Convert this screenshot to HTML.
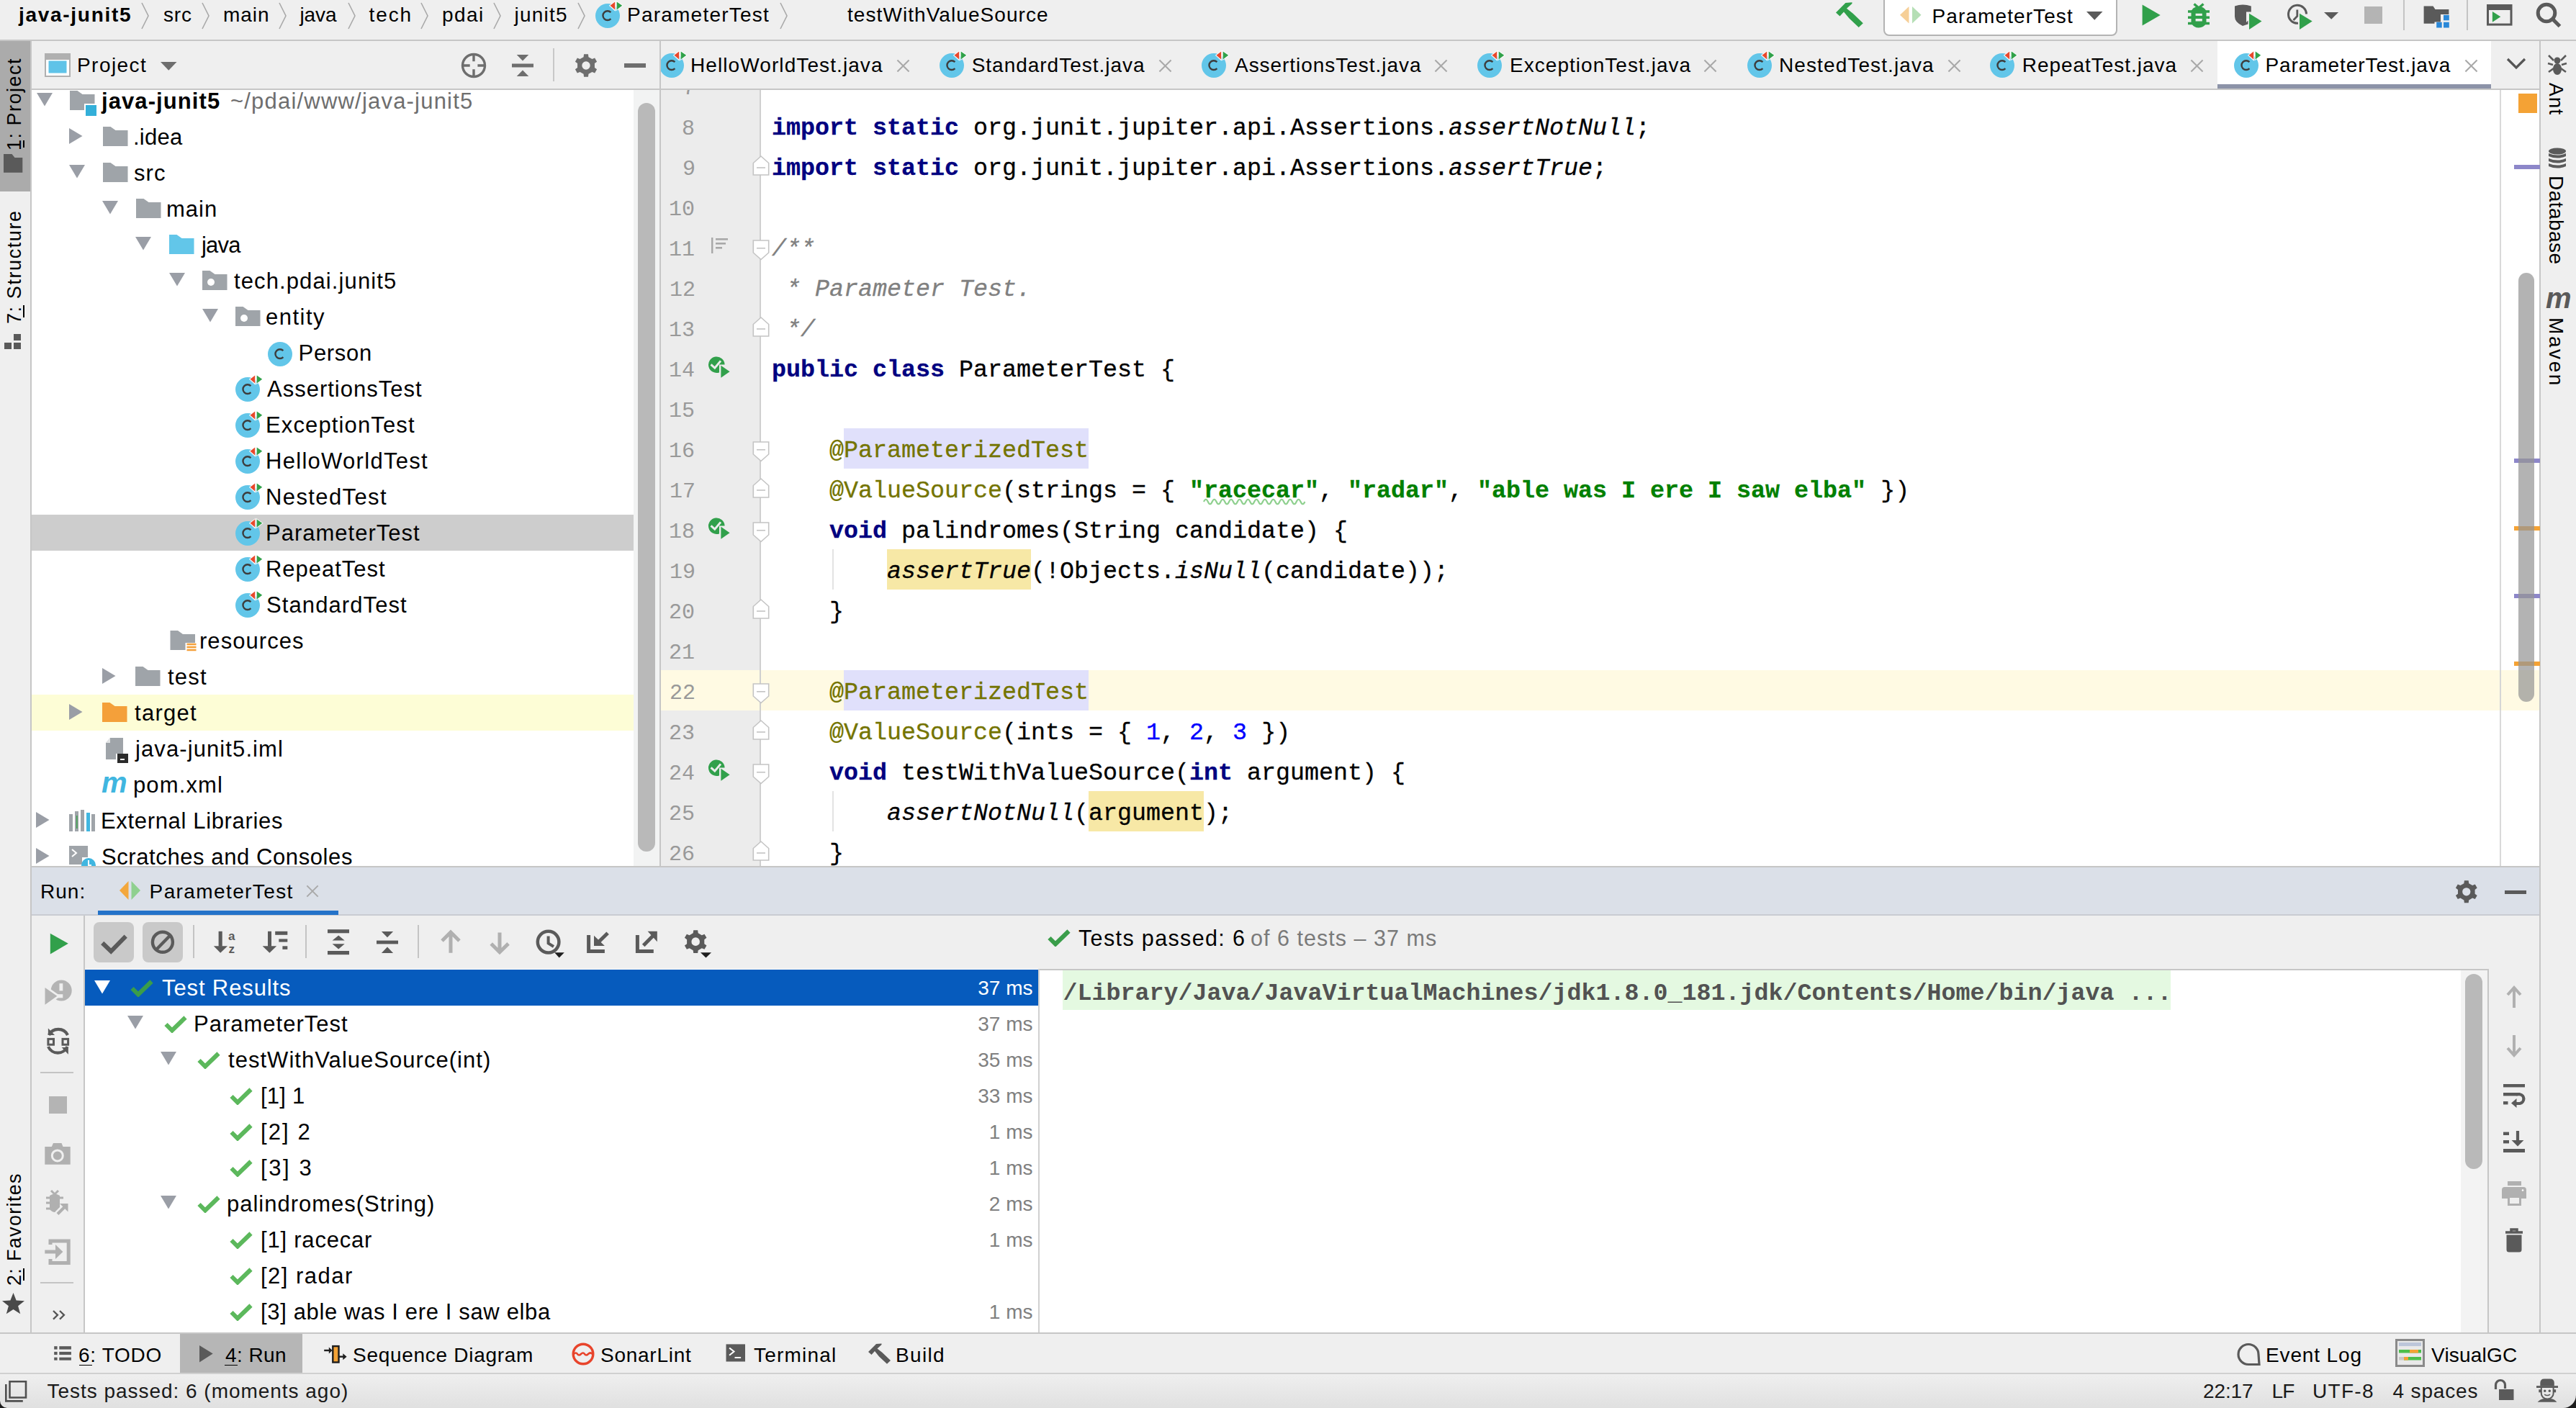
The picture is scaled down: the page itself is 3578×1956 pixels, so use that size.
<!DOCTYPE html>
<html><head><meta charset="utf-8"><style>
html,body{margin:0;padding:0;}
body{width:3578px;height:1956px;position:relative;overflow:hidden;background:#efefef;font-family:'Liberation Sans', sans-serif;}
body div{position:absolute;}
.t{white-space:pre;}
svg{position:absolute;overflow:visible;}
</style></head><body>
<svg width="0" height="0" style="position:absolute;left:0;top:0">
<defs>
<symbol id="clsT" viewBox="0 0 40 40" overflow="visible">
  <circle cx="18" cy="22" r="17" fill="#62c6e9"/>
  <path d="M22.4 17.1 A6.4 6.4 0 1 0 22.4 26.1" fill="none" stroke="#3d3d3d" stroke-width="2.4"/>
  <path d="M19.8 7.7 L29.2 0.8 V15.2 L28 15.2 Z M29.7 0.8 L39.8 7.7 L29.7 15.2 Z" fill="#ffffff" opacity="0.9"/>
  <path d="M21.5 7.7 L28.2 2.4 V13.5 Z" fill="#e9482c"/>
  <path d="M30.7 2.4 L38.2 7.7 L30.7 13.5 Z" fill="#31a24a"/>
</symbol>
<symbol id="cls" viewBox="0 0 40 40" overflow="visible">
  <circle cx="18" cy="22" r="17" fill="#62c6e9"/>
  <path d="M22.4 17.1 A6.4 6.4 0 1 0 22.4 26.1" fill="none" stroke="#3d3d3d" stroke-width="2.4"/>
</symbol>
<symbol id="fold" viewBox="0 0 35 27"><path d="M0 0 H10.5 L17.5 5 H34.5 V27 H0 Z" fill="#9fa4a9"/></symbol>
<symbol id="foldJ" viewBox="0 0 35 27"><path d="M0 0 H10.5 L17.5 5 H34.5 V27 H0 Z" fill="#62c6e9"/></symbol>
<symbol id="foldT" viewBox="0 0 35 27"><path d="M0 0 H10.5 L17.5 5 H34.5 V27 H0 Z" fill="#f4a03a"/></symbol>
<symbol id="foldP" viewBox="0 0 35 27"><path d="M0 0 H10.5 L17.5 5 H34.5 V27 H0 Z" fill="#9fa4a9"/><circle cx="12" cy="16" r="5" fill="#fff"/></symbol>
<symbol id="foldR" viewBox="0 0 35 30" overflow="visible"><path d="M0 0 H10.5 L17.5 5 H34.5 V17 H21 V27 H0 Z" fill="#9fa4a9"/>
  <path d="M23 19 h13 M23 23 h13 M23 27 h13" stroke="#f4a03a" stroke-width="2.4"/></symbol>
<symbol id="foldM" viewBox="0 0 37 35" overflow="visible"><path d="M0 0 H10.5 L17.5 5 H34.5 V18 H20 V27 H0 Z" fill="#9fa4a9"/><rect x="22" y="20" width="15" height="15" fill="#33afd9"/></symbol>
<symbol id="arrD" viewBox="0 0 22 19"><path d="M0 0 H22 L11 18.5 Z" fill="#9a9ea6"/></symbol>
<symbol id="arrR" viewBox="0 0 19 22"><path d="M0 0 L18.5 11 L0 22 Z" fill="#9a9ea6"/></symbol>
<symbol id="chk" viewBox="0 0 32 24"><path d="M2.5 12 L11 20.5 L29.5 2.5" fill="none" stroke="#5cb85c" stroke-width="6"/></symbol>
<symbol id="chkD" viewBox="0 0 32 24"><path d="M2.5 12 L11 20.5 L29.5 2.5" fill="none" stroke="#3a9d4a" stroke-width="6"/></symbol>
<symbol id="runG" viewBox="0 0 32 32" overflow="visible">
  <path d="M22.6 11.5 A11.3 11.3 0 1 0 15 22.4 V11.5 Z" fill="#31a04b"/>
  <path d="M3.5 11.4 L8.8 16.2 L17 6.4" fill="none" stroke="#ececec" stroke-width="3"/>
  <path d="M17.4 12.8 L29.6 21.3 L17.4 29.8 Z" fill="#31a04b"/>
</symbol>
<symbol id="foldS" viewBox="0 0 24 30" overflow="visible"><path d="M1.3 1 H22.7 V18 L12 27.5 L1.3 18 Z" fill="#fff" stroke="#c4c4c4" stroke-width="1.6"/><path d="M6 11.8 H18" stroke="#c4c4c4" stroke-width="1.6"/></symbol>
<symbol id="foldE" viewBox="0 0 24 30" overflow="visible"><path d="M12 1 L22.7 10.5 V27 H1.3 V10.5 Z" fill="#fff" stroke="#c4c4c4" stroke-width="1.6"/><path d="M6 17 H18" stroke="#c4c4c4" stroke-width="1.6"/></symbol>
<symbol id="xgray" viewBox="0 0 20 20"><path d="M1.5 1.5 L18.5 18.5 M18.5 1.5 L1.5 18.5" stroke="#a9a9a9" stroke-width="2.2"/></symbol>
<symbol id="gear" viewBox="0 0 32 32"><path fill="#5e5e5e" d="M13.5 1 h5 l0.8 4.2 a11 11 0 0 1 2.9 1.7 l4 -1.5 2.5 4.3 -3.2 2.8 a11 11 0 0 1 0 3.4 l3.2 2.8 -2.5 4.3 -4 -1.5 a11 11 0 0 1 -2.9 1.7 L18.5 31 h-5 l-0.8 -4.2 a11 11 0 0 1 -2.9 -1.7 l-4 1.5 -2.5 -4.3 3.2 -2.8 a11 11 0 0 1 0 -3.4 L3.3 10.5 5.8 6.2 l4 1.5 a11 11 0 0 1 2.9 -1.7 Z M16 10.5 a5.5 5.5 0 1 0 0.01 0 Z"/></symbol>
</defs></svg>
<div style="left:0px;top:0px;width:3578px;height:55px;background:#efefef;"></div>
<div style="left:0px;top:55px;width:3578px;height:2px;background:#c6c6c6;"></div>
<div class="t" style="left:26.0px;top:7.2px;font-family:'Liberation Sans', sans-serif;font-size:28px;line-height:28px;color:#000;font-weight:bold;letter-spacing:1.71px;">java-junit5</div>
<div class="t" style="left:227.0px;top:7.2px;font-family:'Liberation Sans', sans-serif;font-size:28px;line-height:28px;color:#000;letter-spacing:0.84px;">src</div>
<div class="t" style="left:310.0px;top:7.2px;font-family:'Liberation Sans', sans-serif;font-size:28px;line-height:28px;color:#000;letter-spacing:0.96px;">main</div>
<div class="t" style="left:416.5px;top:7.2px;font-family:'Liberation Sans', sans-serif;font-size:28px;line-height:28px;color:#000;letter-spacing:-0.10px;">java</div>
<div class="t" style="left:512.6px;top:7.2px;font-family:'Liberation Sans', sans-serif;font-size:28px;line-height:28px;color:#000;letter-spacing:1.88px;">tech</div>
<div class="t" style="left:614.0px;top:7.2px;font-family:'Liberation Sans', sans-serif;font-size:28px;line-height:28px;color:#000;letter-spacing:1.43px;">pdai</div>
<div class="t" style="left:714.5px;top:7.2px;font-family:'Liberation Sans', sans-serif;font-size:28px;line-height:28px;color:#000;letter-spacing:1.23px;">junit5</div>
<div class="t" style="left:871.0px;top:7.2px;font-family:'Liberation Sans', sans-serif;font-size:28px;line-height:28px;color:#000;letter-spacing:1.23px;">ParameterTest</div>
<div class="t" style="left:1177.0px;top:7.2px;font-family:'Liberation Sans', sans-serif;font-size:28px;line-height:28px;color:#000;letter-spacing:1.07px;">testWithValueSource</div>
<svg style="left:196px;top:3px" width="12" height="38"><polyline points="1,1 10,19 1,37" fill="none" stroke="#a8a8a8" stroke-width="1.6"/></svg>
<svg style="left:280px;top:3px" width="12" height="38"><polyline points="1,1 10,19 1,37" fill="none" stroke="#a8a8a8" stroke-width="1.6"/></svg>
<svg style="left:387px;top:3px" width="12" height="38"><polyline points="1,1 10,19 1,37" fill="none" stroke="#a8a8a8" stroke-width="1.6"/></svg>
<svg style="left:483px;top:3px" width="12" height="38"><polyline points="1,1 10,19 1,37" fill="none" stroke="#a8a8a8" stroke-width="1.6"/></svg>
<svg style="left:584px;top:3px" width="12" height="38"><polyline points="1,1 10,19 1,37" fill="none" stroke="#a8a8a8" stroke-width="1.6"/></svg>
<svg style="left:685px;top:3px" width="12" height="38"><polyline points="1,1 10,19 1,37" fill="none" stroke="#a8a8a8" stroke-width="1.6"/></svg>
<svg style="left:802px;top:3px" width="12" height="38"><polyline points="1,1 10,19 1,37" fill="none" stroke="#a8a8a8" stroke-width="1.6"/></svg>
<svg style="left:1083px;top:3px" width="12" height="38"><polyline points="1,1 10,19 1,37" fill="none" stroke="#a8a8a8" stroke-width="1.6"/></svg>
<div style="left:0px;top:57px;width:42px;height:1794px;background:#efefef;"></div>
<div style="left:42px;top:57px;width:2px;height:1794px;background:#c6c6c6;"></div>
<div style="left:0px;top:57px;width:42px;height:209px;background:#ababab;"></div>
<div style="left:44px;top:57px;width:872px;height:66px;background:#efefef;"></div>
<div style="left:44px;top:123px;width:872px;height:2px;background:#c6c6c6;"></div>
<div style="left:44px;top:125px;width:872px;height:1078px;background:#ffffff;"></div>
<div style="left:916px;top:57px;width:2px;height:1146px;background:#c6c6c6;"></div>
<div class="t" style="left:107.0px;top:77.2px;font-family:'Liberation Sans', sans-serif;font-size:28px;line-height:28px;color:#000;letter-spacing:1.44px;">Project</div>
<div style="left:880px;top:125px;width:36px;height:1078px;background:#f2f3f3;"></div>
<div style="left:886px;top:143px;width:24px;height:1040px;background:#b9b9b9;border-radius:12px;"></div>
<div style="left:44px;top:715px;width:836px;height:50px;background:#cdcdcd;"></div>
<div style="left:44px;top:965px;width:836px;height:50px;background:#fdfdd6;"></div>
<div style="left:44px;top:125px;width:836px;height:1078px;overflow:hidden">
<div class="t" style="left:97.0px;top:-0.3px;font-family:'Liberation Sans', sans-serif;font-size:31px;line-height:31px;color:#000;font-weight:bold;letter-spacing:1.09px;">java-junit5</div>
<div class="t" style="left:141.0px;top:49.7px;font-family:'Liberation Sans', sans-serif;font-size:31px;line-height:31px;color:#000;letter-spacing:0.25px;">.idea</div>
<div class="t" style="left:142.0px;top:99.7px;font-family:'Liberation Sans', sans-serif;font-size:31px;line-height:31px;color:#000;letter-spacing:1.09px;">src</div>
<div class="t" style="left:187.0px;top:149.7px;font-family:'Liberation Sans', sans-serif;font-size:31px;line-height:31px;color:#000;letter-spacing:1.02px;">main</div>
<div class="t" style="left:236.0px;top:199.7px;font-family:'Liberation Sans', sans-serif;font-size:31px;line-height:31px;color:#000;letter-spacing:-0.80px;">java</div>
<div class="t" style="left:281.0px;top:249.7px;font-family:'Liberation Sans', sans-serif;font-size:31px;line-height:31px;color:#000;letter-spacing:1.11px;">tech.pdai.junit5</div>
<div class="t" style="left:325.0px;top:299.6px;font-family:'Liberation Sans', sans-serif;font-size:31px;line-height:31px;color:#000;letter-spacing:1.48px;">entity</div>
<div class="t" style="left:370.5px;top:349.6px;font-family:'Liberation Sans', sans-serif;font-size:31px;line-height:31px;color:#000;letter-spacing:0.70px;">Person</div>
<div class="t" style="left:327.0px;top:399.6px;font-family:'Liberation Sans', sans-serif;font-size:31px;line-height:31px;color:#000;letter-spacing:1.00px;">AssertionsTest</div>
<div class="t" style="left:325.0px;top:449.6px;font-family:'Liberation Sans', sans-serif;font-size:31px;line-height:31px;color:#000;letter-spacing:1.13px;">ExceptionTest</div>
<div class="t" style="left:325.0px;top:499.6px;font-family:'Liberation Sans', sans-serif;font-size:31px;line-height:31px;color:#000;letter-spacing:1.29px;">HelloWorldTest</div>
<div class="t" style="left:325.0px;top:549.6px;font-family:'Liberation Sans', sans-serif;font-size:31px;line-height:31px;color:#000;letter-spacing:1.39px;">NestedTest</div>
<div class="t" style="left:325.0px;top:599.6px;font-family:'Liberation Sans', sans-serif;font-size:31px;line-height:31px;color:#000;letter-spacing:1.00px;">ParameterTest</div>
<div class="t" style="left:325.0px;top:649.6px;font-family:'Liberation Sans', sans-serif;font-size:31px;line-height:31px;color:#000;letter-spacing:0.98px;">RepeatTest</div>
<div class="t" style="left:326.0px;top:699.6px;font-family:'Liberation Sans', sans-serif;font-size:31px;line-height:31px;color:#000;letter-spacing:1.09px;">StandardTest</div>
<div class="t" style="left:233.0px;top:749.6px;font-family:'Liberation Sans', sans-serif;font-size:31px;line-height:31px;color:#000;letter-spacing:1.05px;">resources</div>
<div class="t" style="left:189.0px;top:799.6px;font-family:'Liberation Sans', sans-serif;font-size:31px;line-height:31px;color:#000;letter-spacing:1.22px;">test</div>
<div class="t" style="left:143.0px;top:849.6px;font-family:'Liberation Sans', sans-serif;font-size:31px;line-height:31px;color:#000;letter-spacing:1.27px;">target</div>
<div class="t" style="left:144.0px;top:899.6px;font-family:'Liberation Sans', sans-serif;font-size:31px;line-height:31px;color:#000;letter-spacing:1.10px;">java-junit5.iml</div>
<div class="t" style="left:141.0px;top:949.6px;font-family:'Liberation Sans', sans-serif;font-size:31px;line-height:31px;color:#000;letter-spacing:1.13px;">pom.xml</div>
<div class="t" style="left:96.0px;top:999.6px;font-family:'Liberation Sans', sans-serif;font-size:31px;line-height:31px;color:#000;letter-spacing:0.66px;">External Libraries</div>
<div class="t" style="left:97.0px;top:1049.7px;font-family:'Liberation Sans', sans-serif;font-size:31px;line-height:31px;color:#000;letter-spacing:0.59px;">Scratches and Consoles</div>
<div class="t" style="left:276.0px;top:-0.3px;font-family:'Liberation Sans', sans-serif;font-size:31px;line-height:31px;color:#6e6e6e;letter-spacing:1.20px;">~/pdai/www/java-junit5</div>
</div>
<div style="left:918px;top:57px;width:2609px;height:66px;background:#efefef;"></div>
<div style="left:918px;top:123px;width:2609px;height:2px;background:#c6c6c6;"></div>
<div style="left:3080px;top:57px;width:380px;height:66px;background:#ffffff;"></div>
<div style="left:3080px;top:117px;width:380px;height:6px;background:#8c93a8;"></div>
<div class="t" style="left:959.0px;top:77.2px;font-family:'Liberation Sans', sans-serif;font-size:28px;line-height:28px;color:#000;letter-spacing:1.09px;">HelloWorldTest.java</div>
<div class="t" style="left:1349.7px;top:77.2px;font-family:'Liberation Sans', sans-serif;font-size:28px;line-height:28px;color:#000;letter-spacing:0.98px;">StandardTest.java</div>
<div class="t" style="left:1715.0px;top:77.2px;font-family:'Liberation Sans', sans-serif;font-size:28px;line-height:28px;color:#000;letter-spacing:0.96px;">AssertionsTest.java</div>
<div class="t" style="left:2097.0px;top:77.2px;font-family:'Liberation Sans', sans-serif;font-size:28px;line-height:28px;color:#000;letter-spacing:1.04px;">ExceptionTest.java</div>
<div class="t" style="left:2471.0px;top:77.2px;font-family:'Liberation Sans', sans-serif;font-size:28px;line-height:28px;color:#000;letter-spacing:1.10px;">NestedTest.java</div>
<div class="t" style="left:2808.8px;top:77.2px;font-family:'Liberation Sans', sans-serif;font-size:28px;line-height:28px;color:#000;letter-spacing:0.96px;">RepeatTest.java</div>
<div class="t" style="left:3146.5px;top:77.2px;font-family:'Liberation Sans', sans-serif;font-size:28px;line-height:28px;color:#000;letter-spacing:0.92px;">ParameterTest.java</div>
<div style="left:918px;top:125px;width:138px;height:1078px;background:#ececec;"></div>
<div style="left:1055px;top:125px;width:2px;height:1078px;background:#cfcfcf;"></div>
<div style="left:1057px;top:125px;width:2416px;height:1078px;background:#ffffff;"></div>
<div style="left:3472px;top:125px;width:2px;height:1078px;background:#d9d9d9;"></div>
<div style="left:3474px;top:125px;width:53px;height:1078px;background:#ffffff;"></div>
<div style="left:3527px;top:57px;width:2px;height:1794px;background:#c6c6c6;"></div>
<div style="left:3529px;top:57px;width:49px;height:1794px;background:#efefef;"></div>
<div style="left:44px;top:1203px;width:3483px;height:2px;background:#c6c6c6;"></div>
<div style="left:44px;top:1205px;width:3483px;height:66px;background:#dbe0e8;"></div>
<div style="left:44px;top:1270px;width:3483px;height:2px;background:#c9ccd2;"></div>
<div class="t" style="left:56.0px;top:1225.2px;font-family:'Liberation Sans', sans-serif;font-size:28px;line-height:28px;color:#000;letter-spacing:1.04px;">Run:</div>
<div class="t" style="left:207.6px;top:1225.2px;font-family:'Liberation Sans', sans-serif;font-size:28px;line-height:28px;color:#000;letter-spacing:1.39px;">ParameterTest</div>
<div style="left:136px;top:1265px;width:334px;height:6px;background:#2473c9;"></div>
<div style="left:44px;top:1272px;width:3483px;height:579px;background:#efefef;"></div>
<div style="left:116px;top:1272px;width:2px;height:579px;background:#c6c6c6;"></div>
<div style="left:118px;top:1346px;width:1324px;height:505px;background:#ffffff;"></div>
<div style="left:1442px;top:1346px;width:2px;height:505px;background:#d0d0d0;"></div>
<div style="left:1444px;top:1346px;width:2011px;height:2px;background:#c6c6c6;"></div>
<div style="left:1444px;top:1348px;width:2011px;height:503px;background:#ffffff;"></div>
<div style="left:3455px;top:1346px;width:2px;height:505px;background:#c6c6c6;"></div>
<div style="left:3418px;top:1348px;width:37px;height:503px;background:#f3f3f3;"></div>
<div style="left:3424px;top:1353px;width:24px;height:271px;background:#b9b9b9;border-radius:12px;"></div>
<div style="left:1476px;top:1348px;width:1539px;height:55px;background:#e4f9e1;"></div>
<div class="t" style="left:1476.5px;top:1363.7px;font-family:'Liberation Mono', monospace;font-size:33.33px;line-height:33.33px;color:#525252;font-weight:bold;">/Library/Java/JavaVirtualMachines/jdk1.8.0_181.jdk/Contents/Home/bin/java ...</div>
<div style="left:118px;top:1347px;width:1324px;height:50px;background:#065bbd;"></div>
<div class="t" style="left:225.0px;top:1356.7px;font-family:'Liberation Sans', sans-serif;font-size:31px;line-height:31px;color:#ffffff;letter-spacing:0.88px;">Test Results</div>
<div class="t" style="left:269.0px;top:1406.7px;font-family:'Liberation Sans', sans-serif;font-size:31px;line-height:31px;color:#000;letter-spacing:1.00px;">ParameterTest</div>
<div class="t" style="left:317.0px;top:1456.7px;font-family:'Liberation Sans', sans-serif;font-size:31px;line-height:31px;color:#000;letter-spacing:1.03px;">testWithValueSource(int)</div>
<div class="t" style="left:362.0px;top:1506.7px;font-family:'Liberation Sans', sans-serif;font-size:31px;line-height:31px;color:#000;letter-spacing:0.23px;">[1] 1</div>
<div class="t" style="left:362.0px;top:1556.7px;font-family:'Liberation Sans', sans-serif;font-size:31px;line-height:31px;color:#000;letter-spacing:2.11px;">[2] 2</div>
<div class="t" style="left:362.0px;top:1606.7px;font-family:'Liberation Sans', sans-serif;font-size:31px;line-height:31px;color:#000;letter-spacing:2.58px;">[3] 3</div>
<div class="t" style="left:315.0px;top:1656.7px;font-family:'Liberation Sans', sans-serif;font-size:31px;line-height:31px;color:#000;letter-spacing:0.99px;">palindromes(String)</div>
<div class="t" style="left:362.0px;top:1706.7px;font-family:'Liberation Sans', sans-serif;font-size:31px;line-height:31px;color:#000;letter-spacing:0.79px;">[1] racecar</div>
<div class="t" style="left:362.0px;top:1756.7px;font-family:'Liberation Sans', sans-serif;font-size:31px;line-height:31px;color:#000;letter-spacing:1.48px;">[2] radar</div>
<div class="t" style="left:362.0px;top:1806.7px;font-family:'Liberation Sans', sans-serif;font-size:31px;line-height:31px;color:#000;letter-spacing:0.64px;">[3] able was I ere I saw elba</div>
<div class="t" style="left:1358.3px;top:1359.2px;font-family:'Liberation Sans', sans-serif;font-size:28px;line-height:28px;color:#ffffff;">37 ms</div>
<div class="t" style="left:1358.3px;top:1409.2px;font-family:'Liberation Sans', sans-serif;font-size:28px;line-height:28px;color:#808080;">37 ms</div>
<div class="t" style="left:1358.3px;top:1459.2px;font-family:'Liberation Sans', sans-serif;font-size:28px;line-height:28px;color:#808080;">35 ms</div>
<div class="t" style="left:1358.3px;top:1509.2px;font-family:'Liberation Sans', sans-serif;font-size:28px;line-height:28px;color:#808080;">33 ms</div>
<div class="t" style="left:1373.8px;top:1559.2px;font-family:'Liberation Sans', sans-serif;font-size:28px;line-height:28px;color:#808080;">1 ms</div>
<div class="t" style="left:1373.8px;top:1609.2px;font-family:'Liberation Sans', sans-serif;font-size:28px;line-height:28px;color:#808080;">1 ms</div>
<div class="t" style="left:1373.8px;top:1659.2px;font-family:'Liberation Sans', sans-serif;font-size:28px;line-height:28px;color:#808080;">2 ms</div>
<div class="t" style="left:1373.8px;top:1709.2px;font-family:'Liberation Sans', sans-serif;font-size:28px;line-height:28px;color:#808080;">1 ms</div>
<div class="t" style="left:1373.8px;top:1809.2px;font-family:'Liberation Sans', sans-serif;font-size:28px;line-height:28px;color:#808080;">1 ms</div>
<div class="t" style="left:1498.0px;top:1288.1px;font-family:'Liberation Sans', sans-serif;font-size:30.5px;line-height:30.5px;color:#000;letter-spacing:1.36px;">Tests passed: 6</div>
<div class="t" style="left:1737.0px;top:1288.1px;font-family:'Liberation Sans', sans-serif;font-size:30.5px;line-height:30.5px;color:#7a7a7a;letter-spacing:1.03px;">of 6 tests – 37 ms</div>
<div style="left:0px;top:1851px;width:3578px;height:2px;background:#c6c6c6;"></div>
<div style="left:0px;top:1853px;width:3578px;height:54px;background:#efefef;"></div>
<div style="left:250px;top:1853px;width:170px;height:54px;background:#b6b6b6;"></div>
<div class="t" style="left:109.0px;top:1869.2px;font-family:'Liberation Sans', sans-serif;font-size:28px;line-height:28px;color:#000;letter-spacing:0.71px;">6: TODO</div>
<div class="t" style="left:313.0px;top:1869.2px;font-family:'Liberation Sans', sans-serif;font-size:28px;line-height:28px;color:#000;letter-spacing:0.42px;">4: Run</div>
<div class="t" style="left:490.0px;top:1869.2px;font-family:'Liberation Sans', sans-serif;font-size:28px;line-height:28px;color:#000;letter-spacing:0.71px;">Sequence Diagram</div>
<div class="t" style="left:834.0px;top:1869.2px;font-family:'Liberation Sans', sans-serif;font-size:28px;line-height:28px;color:#000;letter-spacing:0.74px;">SonarLint</div>
<div class="t" style="left:1047.0px;top:1869.2px;font-family:'Liberation Sans', sans-serif;font-size:28px;line-height:28px;color:#000;letter-spacing:1.20px;">Terminal</div>
<div class="t" style="left:1244.0px;top:1869.2px;font-family:'Liberation Sans', sans-serif;font-size:28px;line-height:28px;color:#000;letter-spacing:1.33px;">Build</div>
<div class="t" style="left:3147.0px;top:1869.2px;font-family:'Liberation Sans', sans-serif;font-size:28px;line-height:28px;color:#000;letter-spacing:0.87px;">Event Log</div>
<div class="t" style="left:3377.0px;top:1869.2px;font-family:'Liberation Sans', sans-serif;font-size:28px;line-height:28px;color:#000;letter-spacing:0.21px;">VisualGC</div>
<div style="left:0px;top:1907px;width:3578px;height:2px;background:#d0d0d0;"></div>
<div style="left:0px;top:1909px;width:3578px;height:47px;background:linear-gradient(#efefef,#e0e0e0);"></div>
<div class="t" style="left:65.5px;top:1919.2px;font-family:'Liberation Sans', sans-serif;font-size:28px;line-height:28px;color:#1a1a1a;letter-spacing:0.97px;">Tests passed: 6 (moments ago)</div>
<div class="t" style="left:3060.0px;top:1919.2px;font-family:'Liberation Sans', sans-serif;font-size:28px;line-height:28px;color:#1a1a1a;letter-spacing:-0.12px;">22:17</div>
<div class="t" style="left:3155.6px;top:1919.2px;font-family:'Liberation Sans', sans-serif;font-size:28px;line-height:28px;color:#1a1a1a;letter-spacing:-0.80px;">LF</div>
<div class="t" style="left:3212.0px;top:1919.2px;font-family:'Liberation Sans', sans-serif;font-size:28px;line-height:28px;color:#1a1a1a;letter-spacing:1.31px;">UTF-8</div>
<div class="t" style="left:3323.6px;top:1919.2px;font-family:'Liberation Sans', sans-serif;font-size:28px;line-height:28px;color:#1a1a1a;letter-spacing:0.82px;">4 spaces</div>
<div style="left:918px;top:125px;width:2609px;height:1078px;overflow:hidden">
<div style="left:0px;top:806px;width:2609px;height:56px;background:#fffae3;"></div>
<div style="left:137px;top:806px;width:2px;height:56px;background:#cfcfcf;"></div>
<div style="left:254px;top:470px;width:340px;height:56px;background:#e0e0fb;"></div>
<div style="left:254px;top:806px;width:340px;height:56px;background:#e0e0fb;"></div>
<div style="left:314px;top:638px;width:200px;height:56px;background:#f7e8a6;"></div>
<div style="left:594px;top:974px;width:160px;height:56px;background:#f7e8a6;"></div>
<div style="left:238px;top:638px;width:2px;height:56px;background:#e3e3e3;"></div>
<div style="left:238px;top:974px;width:2px;height:56px;background:#e3e3e3;"></div>
<div class="t" style="left:154px;top:37.1px;font-family:'Liberation Mono', monospace;font-size:33.33px;line-height:33.33px;color:#000;-webkit-text-stroke:0.3px"><span style="color:#000080;font-weight:bold">import</span> <span style="color:#000080;font-weight:bold">static</span> org.junit.jupiter.api.Assertions.<span style="font-style:italic">assertNotNull</span>;</div>
<div class="t" style="left:154px;top:93.1px;font-family:'Liberation Mono', monospace;font-size:33.33px;line-height:33.33px;color:#000;-webkit-text-stroke:0.3px"><span style="color:#000080;font-weight:bold">import</span> <span style="color:#000080;font-weight:bold">static</span> org.junit.jupiter.api.Assertions.<span style="font-style:italic">assertTrue</span>;</div>
<div class="t" style="left:154px;top:205.1px;font-family:'Liberation Mono', monospace;font-size:33.33px;line-height:33.33px;color:#000;-webkit-text-stroke:0.3px"><span style="color:#808080;font-style:italic">/**</span></div>
<div class="t" style="left:154px;top:261.1px;font-family:'Liberation Mono', monospace;font-size:33.33px;line-height:33.33px;color:#000;-webkit-text-stroke:0.3px"><span style="color:#808080;font-style:italic"> * Parameter Test.</span></div>
<div class="t" style="left:154px;top:317.1px;font-family:'Liberation Mono', monospace;font-size:33.33px;line-height:33.33px;color:#000;-webkit-text-stroke:0.3px"><span style="color:#808080;font-style:italic"> */</span></div>
<div class="t" style="left:154px;top:373.1px;font-family:'Liberation Mono', monospace;font-size:33.33px;line-height:33.33px;color:#000;-webkit-text-stroke:0.3px"><span style="color:#000080;font-weight:bold">public</span> <span style="color:#000080;font-weight:bold">class</span> ParameterTest {</div>
<div class="t" style="left:154px;top:485.1px;font-family:'Liberation Mono', monospace;font-size:33.33px;line-height:33.33px;color:#000;-webkit-text-stroke:0.3px">    <span style="color:#747400">@ParameterizedTest</span></div>
<div class="t" style="left:154px;top:541.1px;font-family:'Liberation Mono', monospace;font-size:33.33px;line-height:33.33px;color:#000;-webkit-text-stroke:0.3px">    <span style="color:#747400">@ValueSource</span>(strings = { <span style="color:#008000;font-weight:bold">"racecar"</span>, <span style="color:#008000;font-weight:bold">"radar"</span>, <span style="color:#008000;font-weight:bold">"able was I ere I saw elba"</span> })</div>
<div class="t" style="left:154px;top:597.1px;font-family:'Liberation Mono', monospace;font-size:33.33px;line-height:33.33px;color:#000;-webkit-text-stroke:0.3px">    <span style="color:#000080;font-weight:bold">void</span> palindromes(String candidate) {</div>
<div class="t" style="left:154px;top:653.1px;font-family:'Liberation Mono', monospace;font-size:33.33px;line-height:33.33px;color:#000;-webkit-text-stroke:0.3px">        <span style="font-style:italic">assertTrue</span>(!Objects.<span style="font-style:italic">isNull</span>(candidate));</div>
<div class="t" style="left:154px;top:709.1px;font-family:'Liberation Mono', monospace;font-size:33.33px;line-height:33.33px;color:#000;-webkit-text-stroke:0.3px">    }</div>
<div class="t" style="left:154px;top:821.1px;font-family:'Liberation Mono', monospace;font-size:33.33px;line-height:33.33px;color:#000;-webkit-text-stroke:0.3px">    <span style="color:#747400">@ParameterizedTest</span></div>
<div class="t" style="left:154px;top:877.1px;font-family:'Liberation Mono', monospace;font-size:33.33px;line-height:33.33px;color:#000;-webkit-text-stroke:0.3px">    <span style="color:#747400">@ValueSource</span>(ints = { <span style="color:#0000ff">1</span>, <span style="color:#0000ff">2</span>, <span style="color:#0000ff">3</span> })</div>
<div class="t" style="left:154px;top:933.1px;font-family:'Liberation Mono', monospace;font-size:33.33px;line-height:33.33px;color:#000;-webkit-text-stroke:0.3px">    <span style="color:#000080;font-weight:bold">void</span> testWithValueSource(<span style="color:#000080;font-weight:bold">int</span> argument) {</div>
<div class="t" style="left:154px;top:989.1px;font-family:'Liberation Mono', monospace;font-size:33.33px;line-height:33.33px;color:#000;-webkit-text-stroke:0.3px">        <span style="font-style:italic">assertNotNull</span>(argument);</div>
<div class="t" style="left:154px;top:1045.1px;font-family:'Liberation Mono', monospace;font-size:33.33px;line-height:33.33px;color:#000;-webkit-text-stroke:0.3px">    }</div>
<div class="t" style="left:30.0px;top:-17.3px;font-family:'Liberation Mono', monospace;font-size:30px;line-height:30px;color:#999999;">7</div>
<div class="t" style="left:29.0px;top:38.7px;font-family:'Liberation Mono', monospace;font-size:30px;line-height:30px;color:#999999;">8</div>
<div class="t" style="left:30.0px;top:94.7px;font-family:'Liberation Mono', monospace;font-size:30px;line-height:30px;color:#999999;">9</div>
<div class="t" style="left:11.0px;top:150.7px;font-family:'Liberation Mono', monospace;font-size:30px;line-height:30px;color:#999999;">10</div>
<div class="t" style="left:11.0px;top:206.7px;font-family:'Liberation Mono', monospace;font-size:30px;line-height:30px;color:#999999;">11</div>
<div class="t" style="left:12.0px;top:262.7px;font-family:'Liberation Mono', monospace;font-size:30px;line-height:30px;color:#999999;">12</div>
<div class="t" style="left:11.0px;top:318.7px;font-family:'Liberation Mono', monospace;font-size:30px;line-height:30px;color:#999999;">13</div>
<div class="t" style="left:11.0px;top:374.7px;font-family:'Liberation Mono', monospace;font-size:30px;line-height:30px;color:#999999;">14</div>
<div class="t" style="left:11.0px;top:430.7px;font-family:'Liberation Mono', monospace;font-size:30px;line-height:30px;color:#999999;">15</div>
<div class="t" style="left:11.0px;top:486.7px;font-family:'Liberation Mono', monospace;font-size:30px;line-height:30px;color:#999999;">16</div>
<div class="t" style="left:12.0px;top:542.7px;font-family:'Liberation Mono', monospace;font-size:30px;line-height:30px;color:#999999;">17</div>
<div class="t" style="left:11.0px;top:598.7px;font-family:'Liberation Mono', monospace;font-size:30px;line-height:30px;color:#999999;">18</div>
<div class="t" style="left:12.0px;top:654.7px;font-family:'Liberation Mono', monospace;font-size:30px;line-height:30px;color:#999999;">19</div>
<div class="t" style="left:11.0px;top:710.7px;font-family:'Liberation Mono', monospace;font-size:30px;line-height:30px;color:#999999;">20</div>
<div class="t" style="left:11.0px;top:766.7px;font-family:'Liberation Mono', monospace;font-size:30px;line-height:30px;color:#999999;">21</div>
<div class="t" style="left:12.0px;top:822.7px;font-family:'Liberation Mono', monospace;font-size:30px;line-height:30px;color:#999999;">22</div>
<div class="t" style="left:11.0px;top:878.7px;font-family:'Liberation Mono', monospace;font-size:30px;line-height:30px;color:#999999;">23</div>
<div class="t" style="left:11.0px;top:934.7px;font-family:'Liberation Mono', monospace;font-size:30px;line-height:30px;color:#999999;">24</div>
<div class="t" style="left:11.0px;top:990.7px;font-family:'Liberation Mono', monospace;font-size:30px;line-height:30px;color:#999999;">25</div>
<div class="t" style="left:11.0px;top:1046.7px;font-family:'Liberation Mono', monospace;font-size:30px;line-height:30px;color:#999999;">26</div>
</div>
<div style="left:3472px;top:931px;width:2px;height:56px;background:#d6d6d6;"></div>
<div style="left:3498px;top:130px;width:26px;height:27px;background:#f4a235;"></div>
<div style="left:3492px;top:229px;width:36px;height:6px;background:#8d87c9;"></div>
<div style="left:3492px;top:637px;width:36px;height:6px;background:#8d87c9;"></div>
<div style="left:3492px;top:731px;width:36px;height:6px;background:#f4a235;"></div>
<div style="left:3492px;top:825px;width:36px;height:6px;background:#8d87c9;"></div>
<div style="left:3492px;top:919px;width:36px;height:6px;background:#f4a235;"></div>
<div style="left:3498px;top:379px;width:22px;height:596px;background:rgba(150,150,150,0.72);border-radius:11px;"></div>
<div style="left:44px;top:125px;width:836px;height:1078px;overflow:hidden">
<svg style="left:6.600000000000001px;top:4px;" width="22" height="19"><use href="#arrD" width="22" height="19"/></svg>
<svg style="left:52.8px;top:1.2999999999999972px;" width="37" height="35"><use href="#foldM" width="37" height="35"/></svg>
<svg style="left:52px;top:53px;" width="19" height="22"><use href="#arrR" width="19" height="22"/></svg>
<svg style="left:98.6px;top:51px;" width="35" height="27"><use href="#fold" width="35" height="27"/></svg>
<svg style="left:52px;top:104px;" width="22" height="19"><use href="#arrD" width="22" height="19"/></svg>
<svg style="left:98.6px;top:101px;" width="35" height="27"><use href="#fold" width="35" height="27"/></svg>
<svg style="left:98px;top:154px;" width="22" height="19"><use href="#arrD" width="22" height="19"/></svg>
<svg style="left:144.6px;top:151px;" width="35" height="27"><use href="#fold" width="35" height="27"/></svg>
<svg style="left:144px;top:204px;" width="22" height="19"><use href="#arrD" width="22" height="19"/></svg>
<svg style="left:190.6px;top:201px;" width="35" height="27"><use href="#foldJ" width="35" height="27"/></svg>
<svg style="left:190.75px;top:254px;" width="22" height="19"><use href="#arrD" width="22" height="19"/></svg>
<svg style="left:237px;top:251px;" width="35" height="27"><use href="#foldP" width="35" height="27"/></svg>
<svg style="left:236.75px;top:304px;" width="22" height="19"><use href="#arrD" width="22" height="19"/></svg>
<svg style="left:283px;top:301px;" width="35" height="27"><use href="#foldP" width="35" height="27"/></svg>
<svg style="left:327px;top:345px;" width="40" height="40"><use href="#cls" width="40" height="40"/></svg>
<svg style="left:281.5px;top:394px;" width="40" height="40"><use href="#clsT" width="40" height="40"/></svg>
<svg style="left:281.5px;top:444px;" width="40" height="40"><use href="#clsT" width="40" height="40"/></svg>
<svg style="left:281.5px;top:494px;" width="40" height="40"><use href="#clsT" width="40" height="40"/></svg>
<svg style="left:281.5px;top:544px;" width="40" height="40"><use href="#clsT" width="40" height="40"/></svg>
<svg style="left:281.5px;top:594px;" width="40" height="40"><use href="#clsT" width="40" height="40"/></svg>
<svg style="left:281.5px;top:644px;" width="40" height="40"><use href="#clsT" width="40" height="40"/></svg>
<svg style="left:281.5px;top:694px;" width="40" height="40"><use href="#clsT" width="40" height="40"/></svg>
<svg style="left:190px;top:751px;" width="40" height="30"><use href="#foldR" width="40" height="30"/></svg>
<svg style="left:98px;top:803px;" width="19" height="22"><use href="#arrR" width="19" height="22"/></svg>
<svg style="left:144px;top:801px;" width="35" height="27"><use href="#fold" width="35" height="27"/></svg>
<svg style="left:51.7px;top:853px;" width="19" height="22"><use href="#arrR" width="19" height="22"/></svg>
<svg style="left:98px;top:851px;" width="35" height="27"><use href="#foldT" width="35" height="27"/></svg>
<svg style="left:102px;top:900px;" width="36" height="36" viewBox="0 0 36 36"><path d="M7 0 H25 V22 H15 V30 H1 V7 Z" fill="#9fa4a9"/><path d="M1 7 L7 0 V7 Z" fill="#fff" opacity="0.7"/><rect x="17" y="22" width="15" height="13" fill="#2b2b2b"/><rect x="21" y="29" width="6" height="2" fill="#fff"/></svg>
<div class="t" style="left:97.0px;top:942.0px;font-family:'Liberation Sans', sans-serif;font-size:40px;line-height:40px;color:#40b6e0;font-weight:bold;font-style:italic;">m</div>
<svg style="left:6px;top:1003px;" width="19" height="22"><use href="#arrR" width="19" height="22"/></svg>
<svg style="left:51.7px;top:1000px;" width="36" height="30" viewBox="0 0 36 30"><rect x="0" y="6" width="5" height="24" fill="#9fa4a9"/><rect x="8" y="2" width="5" height="28" fill="#9fa4a9"/><rect x="10" y="8" width="1.5" height="18" fill="#3aa04a"/><rect x="16" y="0" width="5" height="30" fill="#9fa4a9"/><rect x="24" y="4" width="5" height="26" fill="#40b6e0"/><rect x="31" y="6" width="5" height="24" fill="#9fa4a9"/></svg>
<svg style="left:6px;top:1053px;" width="19" height="22"><use href="#arrR" width="19" height="22"/></svg>
<svg style="left:51.7px;top:1050px;" width="40" height="36" viewBox="0 0 40 36"><path d="M0 0 H26 V16 H18 V26 H0 Z" fill="#9fa4a9"/><path d="M4 5 L10 10 L4 15" fill="none" stroke="#fff" stroke-width="2"/><circle cx="27" cy="27" r="10" fill="#40b6e0"/><path d="M27 20 V27 H31" stroke="#fff" stroke-width="2" fill="none"/></svg>
</div>
<svg style="left:826px;top:0px;" width="40" height="40"><use href="#clsT" width="40" height="40"/></svg>
<svg style="left:915px;top:69px;" width="40" height="40"><use href="#clsT" width="40" height="40"/></svg>
<svg style="left:1245px;top:82px;" width="19" height="19"><use href="#xgray" width="19" height="19"/></svg>
<svg style="left:1303.5px;top:69px;" width="40" height="40"><use href="#clsT" width="40" height="40"/></svg>
<svg style="left:1609px;top:82px;" width="19" height="19"><use href="#xgray" width="19" height="19"/></svg>
<svg style="left:1667.5px;top:69px;" width="40" height="40"><use href="#clsT" width="40" height="40"/></svg>
<svg style="left:1992px;top:82px;" width="19" height="19"><use href="#xgray" width="19" height="19"/></svg>
<svg style="left:2051px;top:69px;" width="40" height="40"><use href="#clsT" width="40" height="40"/></svg>
<svg style="left:2366px;top:82px;" width="19" height="19"><use href="#xgray" width="19" height="19"/></svg>
<svg style="left:2426px;top:69px;" width="40" height="40"><use href="#clsT" width="40" height="40"/></svg>
<svg style="left:2705px;top:82px;" width="19" height="19"><use href="#xgray" width="19" height="19"/></svg>
<svg style="left:2763px;top:69px;" width="40" height="40"><use href="#clsT" width="40" height="40"/></svg>
<svg style="left:3042px;top:82px;" width="19" height="19"><use href="#xgray" width="19" height="19"/></svg>
<svg style="left:3101.5px;top:69px;" width="40" height="40"><use href="#clsT" width="40" height="40"/></svg>
<svg style="left:3422.6px;top:82px;" width="19" height="19"><use href="#xgray" width="19" height="19"/></svg>
<div style="left:916px;top:57px;width:2px;height:66px;background:#c6c6c6;"></div>
<svg style="left:3481px;top:80px;" width="28" height="18" viewBox="0 0 28 18"><path d="M2 2 L14 14 L26 2" fill="none" stroke="#555" stroke-width="3.2"/></svg>
<svg style="left:983.5px;top:495px;" width="32" height="32"><use href="#runG" width="32" height="32"/></svg>
<svg style="left:983.5px;top:719px;" width="32" height="32"><use href="#runG" width="32" height="32"/></svg>
<svg style="left:983.5px;top:1055px;" width="32" height="32"><use href="#runG" width="32" height="32"/></svg>
<svg style="left:1044.5px;top:333.3px;" width="24" height="30"><use href="#foldS" width="24" height="30"/></svg>
<svg style="left:1044.5px;top:613.3px;" width="24" height="30"><use href="#foldS" width="24" height="30"/></svg>
<svg style="left:1044.5px;top:725.3px;" width="24" height="30"><use href="#foldS" width="24" height="30"/></svg>
<svg style="left:1044.5px;top:949.3px;" width="24" height="30"><use href="#foldS" width="24" height="30"/></svg>
<svg style="left:1044.5px;top:1061.3px;" width="24" height="30"><use href="#foldS" width="24" height="30"/></svg>
<svg style="left:1044.5px;top:216.1px;" width="24" height="30"><use href="#foldE" width="24" height="30"/></svg>
<svg style="left:1044.5px;top:440.1px;" width="24" height="30"><use href="#foldE" width="24" height="30"/></svg>
<svg style="left:1044.5px;top:664.1px;" width="24" height="30"><use href="#foldE" width="24" height="30"/></svg>
<svg style="left:1044.5px;top:832.1px;" width="24" height="30"><use href="#foldE" width="24" height="30"/></svg>
<svg style="left:1044.5px;top:1000.1px;" width="24" height="30"><use href="#foldE" width="24" height="30"/></svg>
<svg style="left:1044.5px;top:1168.1px;" width="24" height="30"><use href="#foldE" width="24" height="30"/></svg>
<svg style="left:986px;top:330px;" width="30" height="26" viewBox="0 0 30 26"><rect x="2" y="0" width="2.4" height="22" fill="#a8a8a8"/><rect x="8" y="1" width="17" height="2.6" fill="#a8a8a8"/><rect x="8" y="7" width="14" height="2.6" fill="#a8a8a8"/><rect x="8" y="13" width="9" height="2.6" fill="#a8a8a8"/></svg>
<svg style="left:1672px;top:693.3px;" width="142" height="9" viewBox="0 0 142 9"><path d="M0 4 Q2.92 -2.5 5.85 4 Q8.77 10.5 11.70 4 Q14.62 -2.5 17.55 4 Q20.47 10.5 23.40 4 Q26.32 -2.5 29.25 4 Q32.17 10.5 35.10 4 Q38.02 -2.5 40.95 4 Q43.88 10.5 46.80 4 Q49.73 -2.5 52.65 4 Q55.58 10.5 58.50 4 Q61.43 -2.5 64.35 4 Q67.28 10.5 70.20 4 Q73.12 -2.5 76.05 4 Q78.97 10.5 81.90 4 Q84.82 -2.5 87.75 4 Q90.67 10.5 93.60 4 Q96.52 -2.5 99.45 4 Q102.37 10.5 105.30 4 Q108.22 -2.5 111.15 4 Q114.07 10.5 117.00 4 Q119.92 -2.5 122.85 4 Q125.77 10.5 128.70 4 Q131.62 -2.5 134.55 4 Q137.47 10.5 140.40 4" fill="none" stroke="#8fd08f" stroke-width="2.2"/></svg>
<div style="left:118px;top:1346px;width:1324px;height:505px;overflow:hidden">
<svg style="left:13px;top:16px;" width="22" height="19" viewBox="0 0 22 19"><path d="M0 0 H22 L11 18.5 Z" fill="#fff"/></svg>
<svg style="left:62.599999999999994px;top:15px;" width="32" height="24"><use href="#chkD" width="32" height="24"/></svg>
<svg style="left:59px;top:65px;" width="22" height="19"><use href="#arrD" width="22" height="19"/></svg>
<svg style="left:105px;top:115px;" width="22" height="19"><use href="#arrD" width="22" height="19"/></svg>
<svg style="left:105px;top:315px;" width="22" height="19"><use href="#arrD" width="22" height="19"/></svg>
<svg style="left:109.69999999999999px;top:65px;" width="32" height="24"><use href="#chk" width="32" height="24"/></svg>
<svg style="left:155.60000000000002px;top:115px;" width="32" height="24"><use href="#chk" width="32" height="24"/></svg>
<svg style="left:201px;top:165px;" width="32" height="24"><use href="#chk" width="32" height="24"/></svg>
<svg style="left:201px;top:215px;" width="32" height="24"><use href="#chk" width="32" height="24"/></svg>
<svg style="left:201px;top:265px;" width="32" height="24"><use href="#chk" width="32" height="24"/></svg>
<svg style="left:155.60000000000002px;top:315px;" width="32" height="24"><use href="#chk" width="32" height="24"/></svg>
<svg style="left:201px;top:365px;" width="32" height="24"><use href="#chk" width="32" height="24"/></svg>
<svg style="left:201px;top:415px;" width="32" height="24"><use href="#chk" width="32" height="24"/></svg>
<svg style="left:201px;top:465px;" width="32" height="24"><use href="#chk" width="32" height="24"/></svg>
</div>
<svg style="left:1455px;top:1291px;" width="32" height="24"><use href="#chkD" width="32" height="24"/></svg>
<svg style="left:62px;top:74px;" width="36" height="33" viewBox="0 0 36 33"><rect x="1" y="1" width="34" height="31" fill="#fff" stroke="#b0b0b0" stroke-width="2"/><rect x="1" y="1" width="34" height="8" fill="#b0b0b0"/><rect x="5.5" y="10.5" width="25" height="17" fill="#5fc3e8"/></svg>
<svg style="left:223px;top:86px;" width="23" height="12" viewBox="0 0 23 12"><path d="M0 0 H22.5 L11.25 11.7 Z" fill="#6e6e6e"/></svg>
<svg style="left:640px;top:73px;" width="36" height="36" viewBox="0 0 36 36"><circle cx="18" cy="18" r="15.5" fill="none" stroke="#6e6e6e" stroke-width="3.4"/><path d="M18 2 V12.3 M18 23.2 V34 M2 18 H12.7 M23.4 18 H34" stroke="#6e6e6e" stroke-width="3.4"/></svg>
<svg style="left:710px;top:75px;" width="32" height="32" viewBox="0 0 32 32"><path d="M7.7 1 H24.3 L16 9.4 Z M7.7 31 H24.3 L16 22.6 Z" fill="#6e6e6e"/><rect x="1" y="13.5" width="30" height="5" fill="#6e6e6e"/></svg>
<div style="left:768px;top:67px;width:2px;height:46px;background:#c8c8c8;"></div>
<svg style="left:797px;top:74px;" width="34" height="34" viewBox="0 0 34 34"><path fill-rule="evenodd" fill="#6e6e6e" d="M13.54 5.20 L14.07 1.27 L19.93 1.27 L20.46 5.20 L25.49 8.10 L29.16 6.60 L32.09 11.67 L28.95 14.10 L28.95 19.90 L32.09 22.33 L29.16 27.40 L25.49 25.90 L20.46 28.80 L19.93 32.73 L14.07 32.73 L13.54 28.80 L8.51 25.90 L4.84 27.40 L1.91 22.33 L5.05 19.90 L5.05 14.10 L1.91 11.67 L4.84 6.60 L8.51 8.10 Z M22.70 17.00 A5.7 5.7 0 1 0 11.30 17.00 A5.7 5.7 0 1 0 22.70 17.00 Z"/></svg>
<div style="left:867px;top:88px;width:30px;height:6px;background:#6e6e6e;"></div>
<svg style="left:2548px;top:2px;" width="42" height="38" viewBox="0 0 42 38"><path d="M2 15.4 L15.4 2 L24.5 1.3 L24.5 3 L17 9.7 L25.7 16.8 L39.8 30.3 L33.7 36 L20.5 23.5 L13 14.6 L7.5 20.5 Z" fill="#31a04b"/></svg>
<div style="left:2616px;top:-8px;width:321px;height:54px;background:#fff;border:2px solid #b3b3b3;border-radius:8px;"></div>
<svg style="left:2638px;top:8px;" width="32" height="26" viewBox="0 0 32 26"><path d="M13.5 1 L1 12.8 L13.5 24.6 Z" fill="#f6cf97"/><path d="M18 1 L30.5 12.8 L18 24.6 Z" fill="#b5dfb5"/></svg>
<div class="t" style="left:2683.6px;top:9.2px;font-family:'Liberation Sans', sans-serif;font-size:28px;line-height:28px;color:#000;letter-spacing:1.09px;">ParameterTest</div>
<svg style="left:2898px;top:16px;" width="23" height="12" viewBox="0 0 23 12"><path d="M0 0 H22.5 L11.25 11.7 Z" fill="#5a5a5a"/></svg>
<svg style="left:2975px;top:6px;" width="26" height="30" viewBox="0 0 26 30"><path d="M0.6 0.6 L25.7 15 L0.6 29.6 Z" fill="#31a04b"/></svg>
<svg style="left:3038px;top:3px;" width="32" height="36" viewBox="0 0 32 36"><path d="M9.5 2.5 L16 8 L22.5 2.5" fill="none" stroke="#31a04b" stroke-width="3.4"/><path d="M5.5 12 Q9 6 16 6 Q23 6 26.5 12 V29 Q23 35.5 16 35.5 Q9 35.5 5.5 29 Z" fill="#31a04b"/><path d="M1 13 H31 M1 21.3 H31 M1 29.5 H31" stroke="#31a04b" stroke-width="3.4"/><rect x="11.6" y="15.8" width="9.2" height="3.1" fill="#efefef"/><rect x="11.6" y="23" width="9.2" height="3.5" fill="#efefef"/></svg>
<svg style="left:3103px;top:5px;" width="40" height="38" viewBox="0 0 40 38"><path d="M1 3.5 Q12 -0.5 23.8 3.5 V11.5 H17 V26 L19.5 23.5 V28.5 L12 31 Q1 26 1 18 Z" fill="#5a5a5a"/><path d="M21 13.7 L38.5 24.5 L21 36 Z" fill="#31a04b"/></svg>
<svg style="left:3172px;top:3px;" width="42" height="40" viewBox="0 0 42 40"><path d="M31.5 16.5 A12.5 12.5 0 1 0 20 29.3" fill="none" stroke="#5a5a5a" stroke-width="3"/><path d="M18.8 10.5 V19.5 L13.5 25" fill="none" stroke="#5a5a5a" stroke-width="2.8"/><path d="M22 15.7 L39.7 26.5 L22 38 Z" fill="#31a04b"/></svg>
<svg style="left:3227.8px;top:17px;" width="21" height="10" viewBox="0 0 21 10"><path d="M0 0 H20.1 L10.2 9.8 Z" fill="#5a5a5a"/></svg>
<div style="left:3283.7px;top:8.6px;width:25px;height:24.3px;background:#b4b4b4;"></div>
<div style="left:3338px;top:0px;width:2px;height:42.4px;background:#c4c4c4;"></div>
<svg style="left:3366px;top:8px;" width="37" height="32" viewBox="0 0 37 32"><path d="M0.6 0.6 H13.5 L16.5 5 H35.4 V12 H24 V22.5 H15.5 V24.7 H0.6 Z" fill="#5a5a5a"/><rect x="28" y="12.9" width="7.8" height="7.4" fill="#2a88d8"/><rect x="18.2" y="22.8" width="7.5" height="7.7" fill="#2a88d8"/><rect x="28" y="22.8" width="7.8" height="7.7" fill="#2a88d8"/></svg>
<div style="left:3426px;top:0px;width:2px;height:42.4px;background:#c4c4c4;"></div>
<svg style="left:3454px;top:6px;" width="36" height="30" viewBox="0 0 36 30"><rect x="1.5" y="1.5" width="32.5" height="26.6" fill="none" stroke="#5a5a5a" stroke-width="3"/><rect x="1.5" y="1.5" width="32.5" height="6.5" fill="#5a5a5a"/><path d="M7.9 10.1 L19.3 17.3 L7.9 24.8 Z" fill="#31a04b"/></svg>
<svg style="left:3520px;top:2px;" width="40" height="40" viewBox="0 0 40 40"><circle cx="17" cy="16" r="11.8" fill="none" stroke="#5a5a5a" stroke-width="5"/><path d="M25.5 24.5 L35.5 34.5" stroke="#5a5a5a" stroke-width="5.2"/></svg>
<div style="left:0px;top:207px;width:0;height:0;transform-origin:0 0;transform:rotate(-90deg)">
<div class="t" style="left:-2.0px;top:6.8px;font-family:'Liberation Sans', sans-serif;font-size:27px;line-height:27px;color:#000;letter-spacing:1.49px;">1: Project</div>
</div>
<div style="left:32.4px;top:195px;width:2px;height:10px;background:#000;"></div>
<svg style="left:4.7px;top:213.8px;" width="27" height="26" viewBox="0 0 27 26"><path d="M0 0 H11.5 L15.5 5 H26.3 V25.7 H0 Z" fill="#5a5a5a"/></svg>
<div style="left:0px;top:449px;width:0;height:0;transform-origin:0 0;transform:rotate(-90deg)">
<div class="t" style="left:-1.0px;top:6.8px;font-family:'Liberation Sans', sans-serif;font-size:27px;line-height:27px;color:#000;letter-spacing:1.59px;">7: Structure</div>
</div>
<div style="left:32.4px;top:424px;width:2px;height:17px;background:#000;"></div>
<svg style="left:6px;top:463px;" width="30" height="24" viewBox="0 0 30 24"><rect x="0" y="13" width="10" height="9" fill="#5a5a5a"/><rect x="13" y="13" width="10" height="9" fill="#5a5a5a"/><rect x="13" y="1" width="10" height="9" fill="#5a5a5a"/></svg>
<div style="left:0px;top:1785px;width:0;height:0;transform-origin:0 0;transform:rotate(-90deg)">
<div class="t" style="left:-1.0px;top:6.8px;font-family:'Liberation Sans', sans-serif;font-size:27px;line-height:27px;color:#000;letter-spacing:1.31px;">2: Favorites</div>
</div>
<div style="left:32.4px;top:1762px;width:2px;height:17px;background:#000;"></div>
<svg style="left:2px;top:1795px;" width="34" height="32" viewBox="0 0 34 32"><path d="M16.5 1 L20.6 11.6 L32 12.2 L23.1 19.3 L26.2 30.3 L16.5 24 L6.8 30.3 L9.9 19.3 L1 12.2 L12.4 11.6 Z" fill="#4a4a4a"/></svg>
<div style="left:3578px;top:115px;width:0;height:0;transform-origin:0 0;transform:rotate(90deg)">
<div class="t" style="left:0.0px;top:14.2px;font-family:'Liberation Sans', sans-serif;font-size:28px;line-height:28px;color:#000;letter-spacing:1.13px;">Ant</div>
</div>
<div style="left:3578px;top:246px;width:0;height:0;transform-origin:0 0;transform:rotate(90deg)">
<div class="t" style="left:-2.0px;top:14.2px;font-family:'Liberation Sans', sans-serif;font-size:28px;line-height:28px;color:#000;letter-spacing:0.47px;">Database</div>
</div>
<div style="left:3578px;top:442.7px;width:0;height:0;transform-origin:0 0;transform:rotate(90deg)">
<div class="t" style="left:-2.0px;top:14.2px;font-family:'Liberation Sans', sans-serif;font-size:28px;line-height:28px;color:#000;letter-spacing:2.60px;">Maven</div>
</div>
<svg style="left:3538px;top:75px;" width="28" height="31" viewBox="0 0 28 31"><ellipse cx="14" cy="21" rx="6" ry="8" fill="#5a5a5a"/><circle cx="14" cy="9" r="4.5" fill="#5a5a5a"/><path d="M2 2 L9 9 M26 2 L19 9 M1 13 L8 15 M27 13 L20 15 M2 25 L9 20 M26 25 L19 20" stroke="#5a5a5a" stroke-width="2.6"/></svg>
<svg style="left:3539px;top:205px;" width="26" height="30" viewBox="0 0 26 30"><ellipse cx="13" cy="5" rx="12" ry="4.5" fill="#5a5a5a"/><path d="M1 8 V12 Q13 17 25 12 V8 Q13 13 1 8 Z M1 15 V19 Q13 24 25 19 V15 Q13 20 1 15 Z M1 22 V26 Q13 31 25 26 V22 Q13 27 1 22 Z" fill="#5a5a5a"/></svg>
<div class="t" style="left:3536.0px;top:394.0px;font-family:'Liberation Sans', sans-serif;font-size:40px;line-height:40px;color:#5a5a5a;font-weight:bold;font-style:italic;">m</div>
<svg style="left:165px;top:1223px;" width="31" height="29" viewBox="0 0 31 29"><path d="M13.5 1 L1 14 L13.5 27 Z" fill="#f3a73c"/><path d="M17.5 1 L30 14 L17.5 27 Z" fill="#8fd08f"/></svg>
<svg style="left:425px;top:1229px;" width="18" height="18"><use href="#xgray" width="18" height="18"/></svg>
<svg style="left:3409.2px;top:1221.8px;" width="33.6" height="33.6" viewBox="0 0 33.6 33.6"><path fill-rule="evenodd" fill="#5a5a5a" d="M13.38 5.14 L13.91 1.27 L19.69 1.27 L20.22 5.14 L25.19 8.01 L28.81 6.53 L31.70 11.54 L28.60 13.93 L28.60 19.67 L31.70 22.06 L28.81 27.07 L25.19 25.59 L20.22 28.46 L19.69 32.33 L13.91 32.33 L13.38 28.46 L8.41 25.59 L4.79 27.07 L1.90 22.06 L5.00 19.67 L5.00 13.93 L1.90 11.54 L4.79 6.53 L8.41 8.01 Z M22.43 16.80 A5.62875 5.62875 0 1 0 11.17 16.80 A5.62875 5.62875 0 1 0 22.43 16.80 Z"/></svg>
<div style="left:3479px;top:1236.5px;width:30px;height:5.5px;background:#5a5a5a;"></div>
<div style="left:130px;top:1281px;width:56px;height:56px;background:#c9c9c9;border-radius:8px"></div>
<div style="left:198px;top:1281px;width:56px;height:56px;background:#c9c9c9;border-radius:8px"></div>
<svg style="left:130px;top:1281px;" width="56" height="56" viewBox="0 0 56 56"><path d="M12.2 29 L24.2 40.5 L44.7 19.6" fill="none" stroke="#5a5a5a" stroke-width="6"/></svg>
<svg style="left:198px;top:1281px;" width="56" height="56" viewBox="0 0 56 56"><circle cx="27.9" cy="27.8" r="14" fill="none" stroke="#5a5a5a" stroke-width="4.4"/><path d="M18.5 38.7 L39.8 17" stroke="#5a5a5a" stroke-width="4.4"/></svg>
<div style="left:268.1px;top:1285px;width:2px;height:45.5px;background:#c4c4c4;"></div>
<div style="left:424px;top:1285px;width:2px;height:45.5px;background:#c4c4c4;"></div>
<div style="left:580px;top:1285px;width:2px;height:45.5px;background:#c4c4c4;"></div>
<svg style="left:290px;top:1290px;" width="45" height="38" viewBox="0 0 45 38"><rect x="13.6" y="3.8" width="5.1" height="21" fill="#5a5a5a"/><path d="M6.8 24.3 H26 L16.2 33.7 Z" fill="#5a5a5a"/><text x="27" y="16.2" font-family="Liberation Sans" font-weight="bold" font-size="17" fill="#5a5a5a">a</text><text x="27.5" y="33.8" font-family="Liberation Sans" font-weight="bold" font-size="17" fill="#5a5a5a">z</text></svg>
<svg style="left:360px;top:1290px;" width="45" height="38" viewBox="0 0 45 38"><rect x="12" y="3.8" width="5" height="21" fill="#5a5a5a"/><path d="M4.6 24.3 H24.2 L14.4 33.7 Z" fill="#5a5a5a"/><rect x="22.2" y="3.8" width="17.1" height="5" fill="#5a5a5a"/><rect x="27.3" y="14.4" width="12" height="4.2" fill="#5a5a5a"/><rect x="32.4" y="24.3" width="6.9" height="4.6" fill="#5a5a5a"/></svg>
<svg style="left:450px;top:1288px;" width="40" height="42" viewBox="0 0 40 42"><rect x="5" y="3.2" width="30" height="5.1" fill="#5a5a5a"/><rect x="5" y="33" width="30" height="5.2" fill="#5a5a5a"/><path d="M11.6 18.6 H28.7 L20.2 11.4 Z M11.6 23.2 H28.7 L20.2 30.5 Z" fill="#5a5a5a"/></svg>
<svg style="left:518px;top:1288px;" width="40" height="42" viewBox="0 0 40 42"><rect x="5" y="18.6" width="30" height="4.8" fill="#5a5a5a"/><path d="M11.9 6 H28.1 L20 14.3 Z M11.9 36 H28.1 L20 27.6 Z" fill="#5a5a5a"/></svg>
<svg style="left:606px;top:1288px;" width="40" height="40" viewBox="0 0 40 40"><path d="M8 19 L20 7 L32 19 M20 7.5 V35.7" fill="none" stroke="#b0b0b0" stroke-width="5"/></svg>
<svg style="left:674px;top:1288px;" width="40" height="40" viewBox="0 0 40 40"><path d="M8.2 22.9 L20 34.7 L32.1 22.9 M20 7.5 V35" fill="none" stroke="#b0b0b0" stroke-width="5"/></svg>
<svg style="left:742px;top:1289px;" width="44" height="44" viewBox="0 0 44 44"><circle cx="19.6" cy="19.6" r="14.8" fill="none" stroke="#5a5a5a" stroke-width="4.5"/><path d="M19.6 11.6 V21.5 L27 26" fill="none" stroke="#5a5a5a" stroke-width="4"/><path d="M28.2 34.3 H41.8 L34.7 41.5 Z" fill="#1e1e1e"/></svg>
<svg style="left:812px;top:1292px;" width="36" height="36" viewBox="0 0 36 36"><path d="M5.6 7 V29.6 H27.9" fill="none" stroke="#5a5a5a" stroke-width="5"/><path d="M32.1 4.3 L17 19" stroke="#5a5a5a" stroke-width="5"/><path d="M13 7.8 V22 H27.9 Z" fill="#5a5a5a"/></svg>
<svg style="left:880px;top:1290px;" width="36" height="38" viewBox="0 0 36 38"><path d="M5.4 9 V31.6 H27.8" fill="none" stroke="#5a5a5a" stroke-width="5"/><path d="M13.7 23.4 L27 10" stroke="#5a5a5a" stroke-width="5"/><path d="M19.6 3.8 H32.8 V18.3 Z" fill="#5a5a5a"/></svg>
<svg style="left:948.6999999999999px;top:1291.3999999999999px;" width="34.4" height="34.4" viewBox="0 0 34.4 34.4"><path fill-rule="evenodd" fill="#5a5a5a" d="M13.70 5.25 L14.24 1.27 L20.16 1.27 L20.70 5.25 L25.80 8.19 L29.51 6.67 L32.47 11.80 L29.30 14.26 L29.30 20.14 L32.47 22.60 L29.51 27.73 L25.80 26.21 L20.70 29.15 L20.16 33.13 L14.24 33.13 L13.70 29.15 L8.60 26.21 L4.89 27.73 L1.93 22.60 L5.10 20.14 L5.10 14.26 L1.93 11.80 L4.89 6.67 L8.60 8.19 Z M22.97 17.20 A5.77125 5.77125 0 1 0 11.43 17.20 A5.77125 5.77125 0 1 0 22.97 17.20 Z"/></svg>
<svg style="left:972px;top:1322px;" width="18" height="10" viewBox="0 0 18 10"><path d="M1 1.3 H16 L8.5 8.5 Z" fill="#1e1e1e"/></svg>
<svg style="left:55px;top:1355px;" width="50" height="45" viewBox="0 0 50 45"><circle cx="30.2" cy="21.1" r="14.5" fill="#b4b4b4"/><path d="M7.5 17 L24.3 28.8 L7.5 40.8 Z" fill="#efefef" stroke="#efefef" stroke-width="5.5"/><rect x="27.5" y="11.2" width="4.8" height="10.2" fill="#efefef"/><rect x="23" y="26.2" width="9.3" height="5.1" fill="#efefef"/><path d="M7.5 17 L24.3 28.8 L7.5 40.8 Z" fill="#b4b4b4"/></svg>
<svg style="left:62px;top:1426px;" width="36" height="42" viewBox="0 0 36 42"><path d="M6 12 A14.5 14.5 0 0 1 32 12" fill="none" stroke="#5a5a5a" stroke-width="4.2"/><path d="M5 28 A14.5 14.5 0 0 0 31.5 28" fill="none" stroke="#5a5a5a" stroke-width="4.2"/><path d="M4.9 2.5 L4.9 12 L14 12 Z" fill="#5a5a5a"/><path d="M32.8 38.8 L32.8 29 L23.7 29 Z" fill="#5a5a5a"/><rect x="4.9" y="17.4" width="7.6" height="7.8" fill="#efefef" stroke="#5a5a5a" stroke-width="3"/><rect x="25" y="17.4" width="7.6" height="7.8" fill="#efefef" stroke="#5a5a5a" stroke-width="3"/></svg>
<div style="left:56px;top:1489px;width:46px;height:2px;background:#c4c4c4;"></div>
<div style="left:67.6px;top:1522.5px;width:25px;height:24.2px;background:#b4b4b4;"></div>
<svg style="left:62px;top:1586px;" width="37" height="33" viewBox="0 0 37 33"><path d="M0.3 6.9 H9.8 L12 1.9 H23.5 L25.5 6.9 H35.7 V31.7 H0.3 Z" fill="#b0b0b0"/><circle cx="17.8" cy="19.4" r="7.5" fill="none" stroke="#efefef" stroke-width="3"/></svg>
<svg style="left:63px;top:1652px;" width="34" height="38" viewBox="0 0 34 38"><path d="M8 2 L13 7 L18 2" fill="none" stroke="#b0b0b0" stroke-width="3"/><path d="M6 9 Q13 4 20 9 V28 Q13 36 6 28 Z" fill="#b0b0b0"/><path d="M1 12 H25 M1 19 H19 M1 27 H10" stroke="#b0b0b0" stroke-width="3"/><path d="M16 34 L28 22" stroke="#efefef" stroke-width="7"/><path d="M17 34.5 L27.5 24" stroke="#b0b0b0" stroke-width="4"/><path d="M20 20 H31.5 V31.5 Z" fill="#b0b0b0"/></svg>
<svg style="left:62px;top:1720px;" width="37" height="38" viewBox="0 0 37 38"><path d="M8 9 V4 H33.2 V34.5 H8 V29" fill="none" stroke="#b0b0b0" stroke-width="5"/><path d="M0.3 19 H16" stroke="#b0b0b0" stroke-width="5"/><path d="M15 9 L25.4 19 L15 29 Z" fill="#b0b0b0"/></svg>
<div style="left:56px;top:1781px;width:46px;height:2px;background:#c4c4c4;"></div>
<svg style="left:72px;top:1819px;" width="22" height="16" viewBox="0 0 22 16"><path d="M2 2 L8 7.8 L2 13.6 M11 2 L17 7.8 L11 13.6" fill="none" stroke="#555" stroke-width="2.3"/></svg>
<svg style="left:3476px;top:1368px;" width="32" height="34" viewBox="0 0 32 34"><path d="M7 14 L16 4 L25 14 M16 4.5 V32" fill="none" stroke="#b0b0b0" stroke-width="4"/></svg>
<svg style="left:3476px;top:1436px;" width="32" height="34" viewBox="0 0 32 34"><path d="M7 20 L16 30 L25 20 M16 2 V29.5" fill="none" stroke="#b0b0b0" stroke-width="4"/></svg>
<svg style="left:3476px;top:1505px;" width="34" height="38" viewBox="0 0 34 38"><rect x="1" y="1" width="30" height="4.4" fill="#5a5a5a"/><rect x="1" y="13" width="20" height="4.4" fill="#5a5a5a"/><rect x="1" y="25" width="6.5" height="4.4" fill="#5a5a5a"/><path d="M19 15.2 H24 A6.5 6.5 0 0 1 24 28 H15" fill="none" stroke="#5a5a5a" stroke-width="4.2"/><path d="M12 27.5 L19.5 21 V34 Z" fill="#5a5a5a"/></svg>
<svg style="left:3476px;top:1570px;" width="34" height="33" viewBox="0 0 34 33"><rect x="1" y="2.6" width="8" height="4.4" fill="#5a5a5a"/><rect x="1" y="14" width="8" height="4.4" fill="#5a5a5a"/><rect x="1" y="26" width="30" height="5" fill="#5a5a5a"/><path d="M21 1 V17" stroke="#5a5a5a" stroke-width="4.2"/><path d="M12.6 14 H29.4 L21 22.5 Z" fill="#5a5a5a"/></svg>
<svg style="left:3474px;top:1640px;" width="37" height="36" viewBox="0 0 37 36"><rect x="9" y="1" width="19" height="6" fill="#b0b0b0"/><path d="M1 13 Q1 9 5 9 H31 Q35 9 35 13 V25 H28 V21 H9 V25 H1 Z" fill="#b0b0b0"/><rect x="10.5" y="22.5" width="16" height="11" fill="none" stroke="#b0b0b0" stroke-width="3"/><circle cx="30" cy="13.5" r="1.3" fill="#fff"/></svg>
<svg style="left:3478px;top:1706px;" width="30" height="35" viewBox="0 0 30 35"><path d="M2 6 H26 M10 5 V2 H18 V5" fill="none" stroke="#5a5a5a" stroke-width="3.5"/><path d="M3.5 9.5 H24.5 V30 Q24.5 33.5 21 33.5 H7 Q3.5 33.5 3.5 30 Z" fill="#5a5a5a"/></svg>
<svg style="left:74px;top:1869px;" width="26" height="22" viewBox="0 0 26 22"><rect x="1.2" y="1.2" width="4.4" height="4.4" fill="#5a5a5a"/><rect x="8.3" y="1.2" width="16.6" height="4.4" fill="#5a5a5a"/><rect x="1.2" y="8.9" width="4.4" height="4.2" fill="#5a5a5a"/><rect x="8.3" y="8.9" width="16.6" height="4.2" fill="#5a5a5a"/><rect x="1.2" y="16.7" width="4.4" height="4" fill="#5a5a5a"/><rect x="8.3" y="16.7" width="16.6" height="4" fill="#5a5a5a"/></svg>
<div style="left:110px;top:1895.7px;width:18px;height:1.8px;background:#000;"></div>
<div style="left:312.3px;top:1895.7px;width:17.3px;height:1.8px;background:#000;"></div>
<svg style="left:276px;top:1868px;" width="21" height="26" viewBox="0 0 21 26"><path d="M1 1 L19.7 12.5 L1 24.5 Z" fill="#5a5a5a"/></svg>
<svg style="left:450px;top:1866px;" width="34" height="30" viewBox="0 0 34 30"><path d="M0.2 10 H8" stroke="#1e1e1e" stroke-width="2.4"/><path d="M6.8 5.5 L11.6 10 L6.8 14.5 Z" fill="#1e1e1e"/><rect x="12.3" y="4.1" width="8.2" height="22.4" fill="#f4a235" stroke="#1e1e1e" stroke-width="2.4"/><path d="M20.5 18.7 H27.5" stroke="#1e1e1e" stroke-width="2.4"/><path d="M26.3 14.3 L31.6 18.8 L26.3 23.3 Z" fill="#1e1e1e"/></svg>
<svg style="left:793px;top:1864px;" width="34" height="34" viewBox="0 0 34 34"><circle cx="17" cy="17" r="13.8" fill="none" stroke="#e8442b" stroke-width="3.4"/><path d="M4 17 Q7 14 9 17 T14 17 T19 17 T24 17 T30 17" fill="none" stroke="#e8442b" stroke-width="2.6"/></svg>
<svg style="left:1008px;top:1867px;" width="28" height="25" viewBox="0 0 28 25"><rect x="0.5" y="0.4" width="26.5" height="24.1" fill="#5a5a5a"/><path d="M5.1 5.6 L11.5 10.5 L5.1 15.8" fill="none" stroke="#fff" stroke-width="2"/><rect x="12.5" y="18" width="8.6" height="2" fill="#fff"/></svg>
<svg style="left:1205px;top:1865px;" width="34" height="32" viewBox="0 0 34 32"><path d="M1 13 L12 2 L19.5 1.4 V3 L13.5 8.4 L20.5 14 L32 25 L27 29.8 L16 19.4 L10 12 L5.5 17 Z" fill="#5a5a5a"/></svg>
<svg style="left:3107px;top:1864px;" width="34" height="34" viewBox="0 0 34 34"><path d="M31 31.5 H16 A14 14 0 1 1 30 17.5 Z" fill="none" stroke="#5a5a5a" stroke-width="3.2"/></svg>
<svg style="left:3327px;top:1860px;" width="42" height="40" viewBox="0 0 42 40"><rect x="1.5" y="1.5" width="38" height="36" fill="#e9e9e9" stroke="#8a8a8a" stroke-width="3"/><rect x="5" y="5" width="31" height="5" fill="#bcc6da"/><rect x="5" y="15" width="31" height="4.5" fill="#4bbf4b"/><rect x="20" y="15" width="12" height="4.5" fill="#f4a235"/><rect x="5" y="25" width="9" height="4.5" fill="#c8c8c8"/><rect x="12" y="25" width="24" height="4.5" fill="#4bbf4b"/><rect x="12" y="25" width="6" height="4.5" fill="#f4a235"/></svg>
<svg style="left:6px;top:1915px;" width="32" height="32" viewBox="0 0 32 32"><path d="M7.5 4.2 H30 V26.5 H7.5 Z" fill="none" stroke="#505050" stroke-width="2.6"/><path d="M2.3 8 V31.4 H25.8" fill="none" stroke="#505050" stroke-width="2.6"/></svg>
<svg style="left:3463px;top:1916px;" width="30" height="32" viewBox="0 0 30 32"><path d="M3.5 14 V8 A6.5 6.5 0 0 1 16.5 8 V13" fill="none" stroke="#5a5a5a" stroke-width="3.2"/><rect x="8" y="14" width="20.5" height="15" fill="#5a5a5a"/></svg>
<svg style="left:3522px;top:1914px;" width="34" height="36" viewBox="0 0 34 36"><path d="M6.3 11.4 V7 Q6.3 1.4 12 1.4 H20 Q25.8 1.4 25.8 7 V11.4 Z" fill="#5a5a5a"/><rect x="1" y="11.2" width="30" height="2.8" fill="#5a5a5a"/><path d="M7.8 13.8 V22 A8.4 7.4 0 0 0 24.6 22 V13.8" fill="none" stroke="#5a5a5a" stroke-width="2"/><rect x="4.3" y="16.3" width="3.5" height="4" fill="#5a5a5a"/><rect x="24.6" y="16.3" width="3.5" height="4" fill="#5a5a5a"/><circle cx="12.7" cy="18.2" r="1.7" fill="#5a5a5a"/><circle cx="19.3" cy="18.2" r="1.7" fill="#5a5a5a"/><path d="M12.2 23.2 Q16 26 20 23.2" fill="none" stroke="#5a5a5a" stroke-width="1.5"/><path d="M2.6 33.8 Q6 29.5 12 29 Q16 30.5 20.5 29 Q26.5 29.5 29.4 33.8 Z" fill="#5a5a5a"/></svg>
<svg style="left:69px;top:1296px;" width="27" height="30" viewBox="0 0 27 30"><path d="M0.8 0.7 L25.8 14.7 L0.8 29.4 Z" fill="#31a04b"/></svg>
<svg style="left:0px;top:1946px;" width="10" height="10" viewBox="0 0 10 10"><path d="M0 0 A10 10 0 0 0 10 10 H0 Z" fill="#1c1c1c"/></svg>
<svg style="left:3560px;top:1938px;" width="18" height="18" viewBox="0 0 18 18"><path d="M18 0 A18 18 0 0 1 0 18 H18 Z" fill="#1c1c1c"/></svg>
</body></html>
